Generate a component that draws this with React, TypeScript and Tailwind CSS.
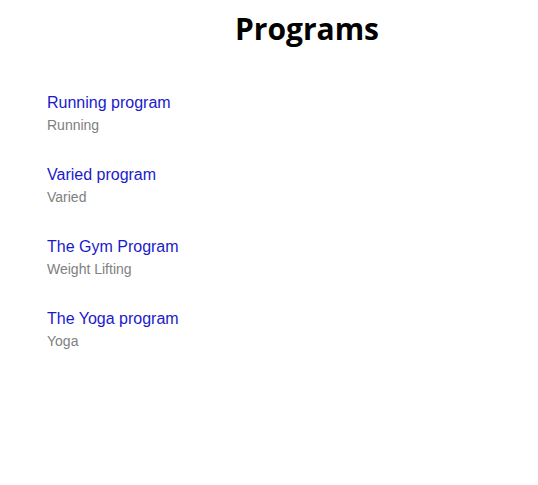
import React from "react";

const programs = [
  { name: "Running program", type: "Running" },
  { name: "Varied program", type: "Varied" },
  { name: "The Gym Program", type: "Weight Lifting" },
  { name: "The Yoga program", type: "Yoga" },
];

export default function App() {
  return (
    <div className="min-h-screen bg-white font-['Liberation_Sans',Arial,sans-serif]">
      <h1 className="pt-[10px] pl-[76px] text-center text-[30px] leading-[38px] font-bold text-black font-['Open_Sans',sans-serif]">
        Programs
      </h1>
      <ul className="mt-[45px] pl-[47px] flex flex-col gap-[32px]">
        {programs.map((p, idx) => (
          <li key={idx} className="flex flex-col">
            <a href="#" className="text-[16px] leading-[19px] text-[#1a1acc]">
              {p.name}
            </a>
            <span className="mt-[5px] text-[14px] leading-[16px] text-[#808080]">
              {p.type}
            </span>
          </li>
        ))}
      </ul>
    </div>
  );
}
